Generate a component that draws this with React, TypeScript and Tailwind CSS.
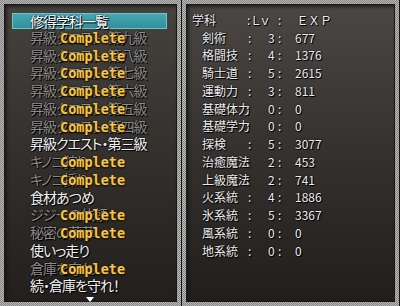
import React from "react";

type Row = { t: string; done?: boolean; sel?: boolean };

const leftRows: Row[] = [
  { t: "修得学科一覧", sel: true },
  { t: "昇級クエスト・第九級", done: true },
  { t: "昇級クエスト・第八級", done: true },
  { t: "昇級クエスト・第七級", done: true },
  { t: "昇級クエスト・第六級", done: true },
  { t: "昇級クエスト・第五級", done: true },
  { t: "昇級クエスト・第四級", done: true },
  { t: "昇級クエスト・第三級" },
  { t: "キノコ狩り", done: true },
  { t: "キノコ採り", done: true },
  { t: "食材あつめ" },
  { t: "ジジーの依頼", done: true },
  { t: "秘密の薬草", done: true },
  { t: "使いっ走り" },
  { t: "倉庫を守れ", done: true },
  { t: "続・倉庫を守れ！" },
];

type Stat = { n: string; lv: string; exp: string };
const stats: Stat[] = [
  { n: "剣術", lv: "3", exp: "677" },
  { n: "格闘技", lv: "4", exp: "1376" },
  { n: "騎士道", lv: "5", exp: "2615" },
  { n: "運動力", lv: "3", exp: "811" },
  { n: "基礎体力", lv: "0", exp: "0" },
  { n: "基礎学力", lv: "0", exp: "0" },
  { n: "探検", lv: "5", exp: "3077" },
  { n: "治癒魔法", lv: "2", exp: "453" },
  { n: "上級魔法", lv: "2", exp: "741" },
  { n: "火系統", lv: "4", exp: "1886" },
  { n: "氷系統", lv: "5", exp: "3367" },
  { n: "風系統", lv: "0", exp: "0" },
  { n: "地系統", lv: "0", exp: "0" },
];

const jp = "font-['Noto_Sans_CJK_JP',sans-serif] [font-feature-settings:'palt']";
const shadow = "[text-shadow:1px_1px_0_#000,0_0_2px_#000]";

export default function App() {
  return (
    <div className="w-[400px] h-[306px] bg-[#161514] flex overflow-hidden">
      {/* Left window */}
      <div className="relative w-[181px] h-[306px] p-[4px] bg-[repeating-conic-gradient(#b8b8b8_0_25%,#858585_0_50%)] bg-[length:2px_2px]">
        <div className="w-full h-full bg-gradient-to-b from-[#46433f] via-[#33302d] to-[#221f1d] shadow-[inset_0_0_0_1px_#1a1918,inset_2px_2px_4px_#141312] pt-[7px] pl-[8px] pr-[10px]">
          <div className={`flex flex-col ${jp} ${shadow} tracking-[-1px]`}>
            {leftRows.map((r, i) =>
              r.sel ? (
                <div key={i} className="h-[17.75px] pt-[2px]">
                  <div className="h-[16px] flex items-center pl-[18px] bg-gradient-to-b from-[#45a9b4] to-[#2f8e99] shadow-[inset_0_0_0_1px_#72c3cb] text-[14px] leading-[16px] text-white">
                    {r.t}
                  </div>
                </div>
              ) : (
                <div
                  key={i}
                  className={
                    r.done
                      ? "relative h-[17.75px] flex items-center pl-[18px] text-[14px] leading-[17.75px] whitespace-nowrap text-[#8e8c8a]"
                      : "relative h-[17.75px] flex items-center pl-[18px] text-[14px] leading-[17.75px] whitespace-nowrap text-[#f2f2f2]"
                  }
                >
                  {r.t}
                  {r.done && (
                    <span className="absolute left-[48px] top-[1px] font-['DejaVu_Sans_Mono',monospace] font-bold tracking-normal text-[13.5px] leading-[17.75px] text-[#f3c54a] [text-shadow:1px_1px_0_#2a1a00,-1px_0_0_#3a2a10,0_1px_2px_#000]">
                      Complete
                    </span>
                  )}
                </div>
              )
            )}
          </div>
        </div>
        {/* down arrow */}
        <div className="absolute left-[86px] top-[297px] w-0 h-0 border-l-[4px] border-r-[4px] border-t-[5px] border-l-transparent border-r-transparent border-t-white" />
      </div>

      {/* Right window */}
      <div className="ml-[1px] w-[217px] h-[306px] p-[4px] bg-[repeating-conic-gradient(#b8b8b8_0_25%,#858585_0_50%)] bg-[length:2px_2px]">
        <div className="w-full h-full bg-gradient-to-b from-[#4a4744] via-[#34312e] to-[#211e1c] shadow-[inset_0_0_0_1px_#1a1918,inset_2px_2px_4px_#141312] pt-[7px] pl-[6px]">
          <div className={`flex flex-col ${jp} ${shadow} text-[#ececec] text-[12px]`}>
            <div className="h-[17.75px] flex items-center whitespace-nowrap">
              <span className="w-[55px]">学科</span>
              <span className="w-[5px]">:</span>
              <span className="w-[26px] tracking-[1px]">Ｌｖ</span>
              <span className="w-[20px]">:</span>
              <span className="tracking-[2px]">ＥＸＰ</span>
            </div>
            {stats.map((s, i) => (
              <div key={i} className="h-[17.75px] flex items-center whitespace-nowrap pl-[10px]">
                <span className={s.n.length >= 4 ? "w-[44px]" : "w-[46px]"}>{s.n}</span>
                <span className={s.n.length >= 4 ? "w-[22px]" : "w-[20px]"}>:</span>
                <span className="w-[10px]">{s.lv}</span>
                <span className="w-[17px]">:</span>
                <span>{s.exp}</span>
              </div>
            ))}
          </div>
        </div>
      </div>
    </div>
  );
}
